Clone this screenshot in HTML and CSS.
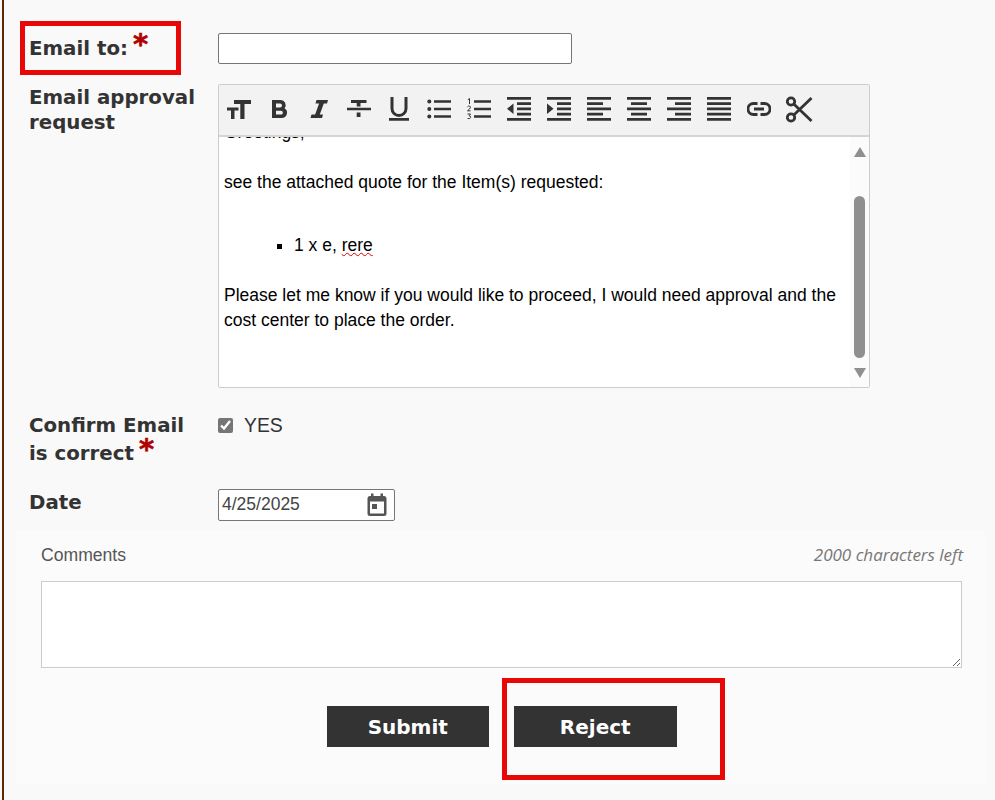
FILE: index.html
```html
<!DOCTYPE html>
<html lang="en">
<head>
<meta charset="utf-8">
<title>Email approval</title>
<link rel="stylesheet" href="styles.css">
</head>
<body>
<main class="page">
  <form class="form">
    <div class="row row-email">
      <label class="label">Email to:<span class="req">*</span></label>
      <input class="text-input" type="text">
    </div>
    <div class="row row-editor">
      <label class="label">Email approval request</label>
      <div class="editor">
        <div class="toolbar">
          <span class="tool"><svg viewBox="0 0 24 24"><path d="M0 10.500h11.500v3H7.500V22h-3.500v-8.500H0zM7 3h17v4h-6.500v15h-4.200V7H7z"/></svg></span>
          <span class="tool"><svg viewBox="0 0 24 24"><path fill-rule="evenodd" d="M5 3h8.500a5 5 0 0 1 4 8.200A5.300 5.300 0 0 1 14.500 21H5zm4 3.500v4h4a2 2 0 0 0 0-4zm0 7.300v3.700h5a1.850 1.850 0 0 0 0-3.700z"/></svg></span>
          <span class="tool"><svg viewBox="0 0 24 24"><path d="M9.500 3H21l-1 3.500h-3.200L12.800 17.500H16L15 21H3.500l1-3.500h3.600l4-11h-3.600z"/></svg></span>
          <span class="tool"><svg viewBox="0 0 24 24"><path d="M0 10.800h24v2.400H0zM4 3h15.500v3h-6v3.500h-3.800V6H4zM9.700 15.500h3.800V20H9.700z"/></svg></span>
          <span class="tool"><svg viewBox="0 0 24 24"><path d="M3.500 0h3v11.500a5.500 5.500 0 0 0 11 0V0h3v11.500a8.500 8.500 0 0 1-17 0zM2 21h20v2.700H2z"/></svg></span>
          <span class="tool"><svg viewBox="0 0 24 24"><circle cx="2.300" cy="4.500" r="2"/><circle cx="2.300" cy="12" r="2"/><circle cx="2.300" cy="19.500" r="2"/><path d="M7 3.300h17v2.500H7zM7 10.800h17v2.500H7zM7 18.300h17v2.500H7z"/></svg></span>
          <span class="tool"><svg viewBox="0 0 24 24"><path d="M7 3.300h17v2.500H7zM7 10.800h17v2.500H7zM7 18.300h17v2.500H7z"/><path class="fine" d="M0.800 2.800 2.500 1.500v5.500M0.500 9.800q1-1.300 2.400-.6t-.2 2.600L0.500 13.800h3M0.500 17h3l-1.400 1.800q1.800 0 1.500 1.700t-3 1"/></svg></span>
          <span class="tool"><svg viewBox="0 0 24 24"><path d="M0 0h24v2.700H0zM10 5.200h14v2.700H10zM10 10.500h14v2.700H10zM10 15.800h14v2.700H10zM0 21h24v2.700H0zM6.500 6.500v10.500L0 11.800z"/></svg></span>
          <span class="tool"><svg viewBox="0 0 24 24"><path d="M0 0h24v2.700H0zM10 5.200h14v2.700H10zM10 10.500h14v2.700H10zM10 15.800h14v2.700H10zM0 21h24v2.700H0zM0 6.500v10.500l6.500-5.200z"/></svg></span>
          <span class="tool"><svg viewBox="0 0 24 24"><path d="M0 0h24v2.700H0zM0 5.200h16v2.700H0zM0 10.500h24v2.700H0zM0 15.800h16v2.700H0zM0 21h24v2.700H0z"/></svg></span>
          <span class="tool"><svg viewBox="0 0 24 24"><path d="M0 0h24v2.700H0zM4 5.200h16v2.700H4zM0 10.500h24v2.700H0zM4 15.800h16v2.700H4zM0 21h24v2.700H0z"/></svg></span>
          <span class="tool"><svg viewBox="0 0 24 24"><path d="M0 0h24v2.700H0zM8 5.200h16v2.700H8zM0 10.500h24v2.700H0zM8 15.800h16v2.700H8zM0 21h24v2.700H0z"/></svg></span>
          <span class="tool"><svg viewBox="0 0 24 24"><path d="M0 0h24v2.700H0zM0 5.200h24v2.700H0zM0 10.500h24v2.700H0zM0 15.800h24v2.700H0zM0 21h24v2.700H0z"/></svg></span>
          <span class="tool"><svg viewBox="0 0 24 24"><path class="line" d="M10.500 6.500H6.500a5.500 5.500 0 0 0 0 11h4M13.500 6.500h4a5.500 5.500 0 0 1 0 11h-4M7 12h10"/></svg></span>
          <span class="tool tool-cut"><svg viewBox="0 0 27 27"><circle class="line" cx="5" cy="5.500" r="3.700"/><circle class="line" cx="5" cy="21.500" r="3.700"/><path class="line" d="M7.800 8 25.500 25M7.800 19 25.500 2"/></svg></span>
        </div>
        <div class="editor-view">
          <div class="editor-content">
            <p class="greet">Greetings,</p>
            <p class="quote">see the attached quote for the Item(s) requested:</p>
            <ul class="items"><li>1 x e, <span class="misspelt">rere</span></li></ul>
            <p class="ask">Please let me know if you would like to proceed, I would need approval and the cost center to place the order.</p>
          </div>
          <div class="scrollbar">
            <span class="arrow arrow-up"></span>
            <span class="thumb"></span>
            <span class="arrow arrow-down"></span>
          </div>
        </div>
      </div>
    </div>
    <div class="row row-confirm">
      <label class="label">Confirm Email is correct<span class="req">*</span></label>
      <label class="check"><input type="checkbox" checked><span>YES</span></label>
    </div>
    <div class="row row-date">
      <label class="label">Date</label>
      <div class="date-input"><span>4/25/2025</span><svg viewBox="0 0 24 24"><path fill-rule="evenodd" d="M19 3h-1V.500h-2.500V3h-7V.500H6V3H5a2.500 2.500 0 0 0-2.500 2.500v15A2.500 2.500 0 0 0 5 23h14a2.500 2.500 0 0 0 2.500-2.500v-15A2.500 2.500 0 0 0 19 3zm0 17.500H5V8.500h14zM7 11h5v5H7z"/></svg></div>
    </div>
    <section class="comments">
      <div class="comments-head">
        <span class="comments-label">Comments</span>
        <span class="counter">2000 characters left</span>
      </div>
      <textarea class="comments-box"></textarea>
      <div class="actions">
        <button type="button" class="btn">Submit</button>
        <button type="button" class="btn">Reject</button>
      </div>
    </section>
  </form>
</main>
<div class="mark mark-email"></div>
<div class="mark mark-reject"></div>
</body>
</html>
```
FILE: styles.css
```css
* { box-sizing: border-box; }
html, body { margin: 0; padding: 0; height: 800px; overflow: hidden; }
body {
  background: #f9f9f9;
  color: #333;
  font-family: "Liberation Sans", Arial, sans-serif;
  position: relative;
}
.page {
  height: 800px;
  margin-left: 2px;
  border-left: 2px solid #5c2a00;
  padding-left: 12px;
  padding-right: 10px;
}
.form { display: flex; flex-direction: column; }
.row { display: flex; padding-left: 13px; }
.row-email { height: 51px; margin-top: 33px; }
.row-editor { height: 326px; }
.row-confirm { height: 79px; padding-top: 4px; }
.row-date { height: 41px; }
.label {
  width: 189px;
  flex: none;
  padding-right: 12px;
  font: bold 19.800px/25px "DejaVu Sans", Verdana, sans-serif;
  color: #333;
}
.row-email .label { line-height: 32px; }
.row-editor .label { margin-top: 1px; }
.row-confirm .label { line-height: 28px; margin-top: -2px; }
.row-date .label { line-height: 28px; }
.req {
  color: #b00000;
  font-size: 29px;
  line-height: 0;
  margin-left: 5px;
  position: relative;
  top: -1px;
  -webkit-text-stroke: 0.6px #b00000;
}
.text-input {
  width: 354px;
  height: 31px;
  border: 1px solid #767676;
  border-radius: 2px;
  background: #fff;
  padding: 0;
  margin: 0;
}
.editor {
  width: 652px;
  height: 304px;
  border: 1px solid #ccc;
  border-radius: 2px;
  background: #fff;
  display: flex;
  flex-direction: column;
}
.toolbar {
  height: 52px;
  flex: none;
  background: #f2f2f2;
  border-bottom: 2px solid #d4d4d4;
  display: flex;
  align-items: center;
  padding-bottom: 2px;
}
.tool {
  width: 40px;
  height: 24px;
  flex: none;
  display: flex;
  justify-content: center;
}
.tool svg { width: 24px; height: 24px; fill: #333; display: block; flex: none; }
.tool .line { fill: none; stroke: #333; stroke-width: 2.800; }
.tool .fine { fill: none; stroke: #333; stroke-width: 1; }
.tool-cut svg { width: 27px; height: 27px; margin-top: -1px; }
.editor-view { flex: 1; position: relative; overflow: hidden; min-height: 0; }
.editor-content {
  margin-top: -17.500px;
  padding: 0 28px 0 5px;
  font-size: 17.500px;
  line-height: 25px;
  color: #000;
}
.editor-content p { margin: 0; }
.quote { padding-top: 25px; }
.items { list-style: square; margin: 38px 0 0; padding-left: 70px; }
.ask { padding-top: 25px; }
.misspelt { text-decoration: underline wavy #d00; text-decoration-thickness: 1px; text-underline-offset: 1px; }
.scrollbar {
  position: absolute;
  top: 0; right: 0; bottom: 0;
  width: 19px;
  background: #fbfbfb;
  display: flex;
  flex-direction: column;
  align-items: center;
  padding-top: 10px;
}
.arrow { width: 0; height: 0; border-left: 6.500px solid transparent; border-right: 6.500px solid transparent; flex: none; }
.arrow-up { border-bottom: 10px solid #8f8f8f; }
.arrow-down { border-top: 10px solid #8f8f8f; }
.thumb { width: 11px; height: 162px; background: #8f8f8f; border-radius: 6px; margin: 39px 0 10px; flex: none; }
.check { display: flex; align-items: flex-start; font-size: 19.400px; line-height: 22px; }
.check input { width: 15px; height: 15px; margin: 4px 11px 0 0; accent-color: #767676; }
.date-input {
  width: 177px;
  height: 32px;
  border: 1px solid #767676;
  border-radius: 2px;
  background: #fff;
  display: flex;
  align-items: center;
  justify-content: space-between;
  padding: 0 3px 1px;
  font-size: 17.500px;
  color: #444;
}
.date-input svg { width: 24px; height: 24px; fill: #555; margin-right: 2px; }
.comments {
  background: #fbfbfb;
  height: 254px;
  padding: 14px 23px 0 25px;
  display: flex;
  flex-direction: column;
}
.comments-head { display: flex; justify-content: space-between; align-items: center; height: 22px; margin-bottom: 15px; }
.comments-label { font-size: 17.600px; color: #555; }
.counter { font: italic 17px "Open Sans", sans-serif; color: #777; margin-right: -1px; position: relative; top: -1px; }
.comments-box {
  width: 100%;
  height: 87px;
  border: 1px solid #ccc;
  background: #fff;
  display: block;
  margin: 0;
  padding: 0;
  flex: none;
}
.actions { display: flex; justify-content: center; gap: 25px; margin-top: 38px; }
.btn {
  width: 162.500px;
  height: 41px;
  border: 0;
  background: #333;
  color: #fff;
  font: bold 20px "DejaVu Sans", Verdana, sans-serif;
  padding: 0;
}
.mark { position: absolute; border: 5px solid #e90808; }
.mark-email { left: 20px; top: 21px; width: 161px; height: 54px; }
.mark-reject { left: 502px; top: 678px; width: 223px; height: 102px; }
```
